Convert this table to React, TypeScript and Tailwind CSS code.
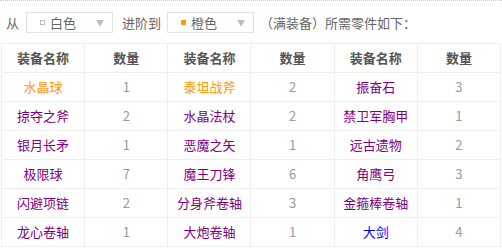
import React from "react";

type Cell = { name: string; color: string; n: number };
const O = "#ff9900";
const P = "#800080";
const B = "#0000ff";

const rows: Cell[][] = [
  [
    { name: "水晶球", color: O, n: 1 },
    { name: "泰坦战斧", color: O, n: 2 },
    { name: "振奋石", color: P, n: 3 },
  ],
  [
    { name: "掠夺之斧", color: P, n: 2 },
    { name: "水晶法杖", color: P, n: 2 },
    { name: "禁卫军胸甲", color: P, n: 1 },
  ],
  [
    { name: "银月长矛", color: P, n: 1 },
    { name: "恶魔之矢", color: P, n: 1 },
    { name: "远古遗物", color: P, n: 2 },
  ],
  [
    { name: "极限球", color: P, n: 7 },
    { name: "魔王刀锋", color: P, n: 6 },
    { name: "角鹰弓", color: P, n: 3 },
  ],
  [
    { name: "闪避项链", color: P, n: 2 },
    { name: "分身斧卷轴", color: P, n: 3 },
    { name: "金箍棒卷轴", color: P, n: 1 },
  ],
  [
    { name: "龙心卷轴", color: P, n: 1 },
    { name: "大炮卷轴", color: P, n: 1 },
    { name: "大剑", color: B, n: 4 },
  ],
];

function Select({ label, filled }: { label: string; filled: boolean }) {
  return (
    <div className="flex items-center w-[87px] h-[21px] border border-[#e3e3e3] bg-white pl-[13px] pr-[8px]">
      <span
        className={
          filled
            ? "w-[5px] h-[5px] bg-[#ff9900] mr-[5px]"
            : "w-[5px] h-[5px] border border-[#bbbbbb] mr-[5px]"
        }
      />
      <span className="text-[#666] flex-1">{label}</span>
      <span className="text-[#bbb] text-[8px] leading-none">▼</span>
    </div>
  );
}

export default function App() {
  return (
    <div
      className="w-[502px] h-[250px] bg-white border-t border-dotted border-[#cccccc] overflow-hidden"
      style={{ fontFamily: '"Noto Sans CJK SC", "Noto Sans", sans-serif' }}
    >
      <div className="flex items-center h-[21px] mt-[11px] text-[13px] text-[#666]">
        <span className="ml-[6px] w-[20px]">从</span>
        <Select label="白色" filled={false} />
        <span className="ml-[9px] w-[45px]">进阶到</span>
        <Select label="橙色" filled={true} />
        <span className="ml-[6px]">（满装备）所需零件如下：</span>
      </div>
      <table className="mt-[10px] ml-[1px] w-[500px] border-collapse table-fixed text-[13px]">
        <thead>
          <tr className="h-[29px]">
            {["装备名称", "数量", "装备名称", "数量", "装备名称", "数量"].map((h, i) => (
              <th
                key={i}
                className="border border-[#eeeeee] font-bold text-[#555] text-center p-0"
              >
                {h}
              </th>
            ))}
          </tr>
        </thead>
        <tbody>
          {rows.map((r, i) => (
            <tr key={i} className="h-[29px]">
              {r.map((c, j) => (
                <React.Fragment key={j}>
                  <td
                    className="border border-[#eeeeee] text-center p-0"
                    style={{ color: c.color }}
                  >
                    {c.name}
                  </td>
                  <td className="border border-[#eeeeee] text-center p-0 text-[#999]">
                    {c.n}
                  </td>
                </React.Fragment>
              ))}
            </tr>
          ))}
        </tbody>
      </table>
    </div>
  );
}
